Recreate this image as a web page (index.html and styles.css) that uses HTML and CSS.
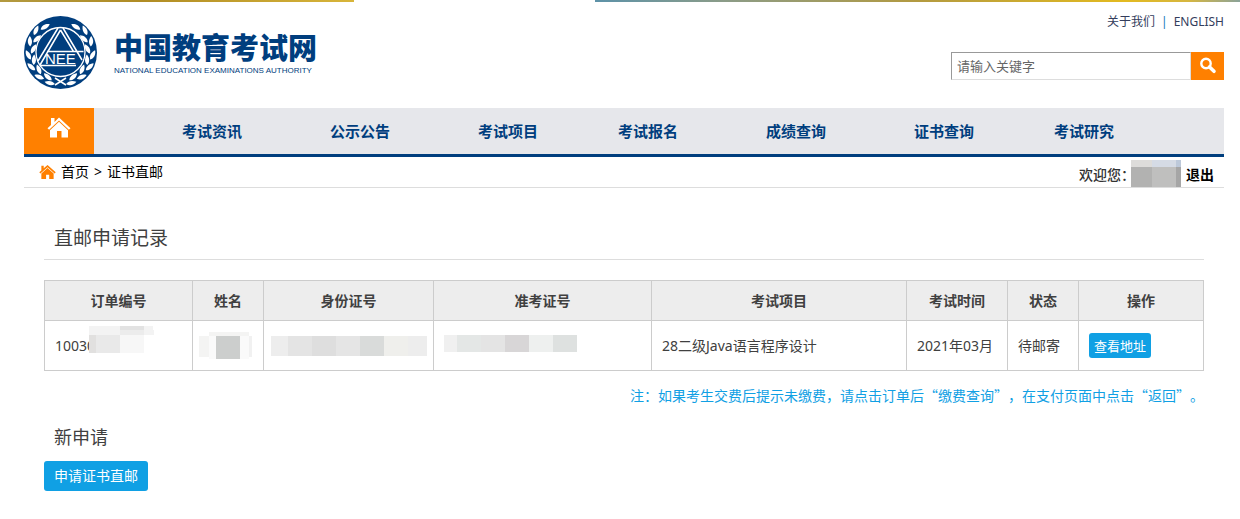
FILE: index.html
```html
<!DOCTYPE html>
<html lang="zh-CN">
<head>
<meta charset="utf-8">
<meta name="viewport" content="width=device-width, initial-scale=1">
<title>中国教育考试网 - 证书直邮</title>
<link rel="stylesheet" href="styles.css">
</head>
<body>
<div class="strip"><span class="strip-left"></span><span class="strip-right"></span></div>
<div class="page">
  <header class="header">
    <a class="brand" href="#">
      <svg class="emblem" viewBox="0 0 73 73" aria-hidden="true">
        <defs>
          <g id="leaf"><path d="M0 5C-3.200 2-2.600-2.500 0-5.500C2.500-2 2.800 2 0 5Z"/></g>
          <g id="branch" fill="#fff">
            <use href="#leaf" transform="translate(26 67) rotate(-78)"/>
            <use href="#leaf" transform="translate(24 61) rotate(-48)"/>
            <use href="#leaf" transform="translate(15.500 61) rotate(-68)"/>
            <use href="#leaf" transform="translate(15 53.500) rotate(-22)"/>
            <use href="#leaf" transform="translate(7.500 51) rotate(-48)"/>
            <use href="#leaf" transform="translate(10 44) rotate(2)"/>
            <use href="#leaf" transform="translate(4.500 39) rotate(-28)"/>
            <use href="#leaf" transform="translate(9.500 33) rotate(28)"/>
            <use href="#leaf" transform="translate(6 25.500) rotate(-2)"/>
            <use href="#leaf" transform="translate(13 23) rotate(48)"/>
            <use href="#leaf" transform="translate(12 14.500) rotate(24)"/>
            <use href="#leaf" transform="translate(21 11) rotate(60)"/>
          </g>
        </defs>
        <circle cx="36.500" cy="36.500" r="36.500" fill="#003e7e"/>
        <use href="#branch"/>
        <use href="#branch" transform="translate(73 0) scale(-1 1)"/>
        <path d="M31 69L42 62M42 69L31 62" stroke="#fff" stroke-width="1.500"/>
        <circle cx="36.500" cy="36" r="24.500" fill="#003e7e" stroke="#fff" stroke-width="1.300"/>
        <path d="M34 12L14 45M39 12L58 44M36.500 14L16 49M36.500 14L49.500 35.500M23 35.500H59.500M16 49.500H52" fill="none" stroke="#fff" stroke-width="1.500"/>
        <text x="21" y="48" class="emblem-text">NEE</text>
      </svg>
      <span class="brand-names">
        <strong class="brand-cn">中国教育考试网</strong>
        <span class="brand-en">NATIONAL EDUCATION EXAMINATIONS AUTHORITY</span>
      </span>
    </a>
    <div class="tools">
      <div class="links"><a href="#">关于我们</a><span class="bar">|</span><a href="#">ENGLISH</a></div>
      <form class="search">
        <input type="text" aria-label="请输入关键字" placeholder="请输入关键字">
        <button type="button" aria-label="搜索">
          <svg width="18" height="18" viewBox="0 0 18 18" fill="none" stroke="#fff"><circle cx="7" cy="6.500" r="4.700" stroke-width="2.400"/><path d="M10.500 10L15 14.300" stroke-width="3.600" stroke-linecap="round"/></svg>
        </button>
      </form>
    </div>
  </header>
  <nav class="nav" aria-label="主导航">
    <a class="home" href="#" aria-label="首页">
      <svg width="24" height="22" viewBox="0 0 24 22" fill="#fff"><path d="M4 1h3.500v4L12 .5l11.500 10.800-1.600 1.500L12 3.500 2.100 12.800.5 11.300 4 8Z"/><path d="M12 4.700L21 13.200V20.500H14.500V14H10V20.500H3V13.200Z"/></svg>
    </a>
    <ul class="menu">
      <li><a href="#">考试资讯</a></li>
      <li><a href="#">公示公告</a></li>
      <li class="tight"><a href="#">考试项目</a></li>
      <li><a href="#">考试报名</a></li>
      <li><a href="#">成绩查询</a></li>
      <li class="tight"><a href="#">证书查询</a></li>
      <li><a href="#">考试研究</a></li>
    </ul>
  </nav>
  <div class="crumbs">
    <div class="trail">
      <svg width="17" height="16" viewBox="0 0 18 16" fill="#ff8000"><path d="M2.500 1.500H5V4L9 .5l8.700 7.800-1.200 1.200L9 2.900 1.500 9.500.3 8.300 2.500 6.300Z"/><path d="M9 3.800L15.500 9.500V15.500H10.800V11H7.500V15.500H2.500V9.500Z"/></svg>
      <a href="#">首页</a><span class="sep">&gt;</span><span>证书直邮</span>
    </div>
    <div class="user">
      <span>欢迎您：</span>
      <svg width="50" height="27" viewBox="0 0 50 27" shape-rendering="crispEdges" aria-hidden="true"><path fill="#dddcda" d="M0 0h21v7H0z"/><path fill="#d5dbe5" d="M21 0h24v7H21z"/><path fill="#bdc9da" d="M45 0h5v7h-5z"/><path fill="#b2b2b1" d="M0 7h21v20H0z"/><path fill="#bfbfbe" d="M21 7h24v20H21z"/><path fill="#a6a6a6" d="M45 7h5v20h-5z"/></svg>
      <a href="#">退出</a>
    </div>
  </div>
  <main class="content">
    <h1>直邮申请记录</h1>
    <table class="records">
      <colgroup><col class="c-order"><col class="c-name"><col class="c-id"><col class="c-ticket"><col class="c-exam"><col class="c-date"><col class="c-state"><col class="c-action"></colgroup>
      <thead><tr><th scope="col">订单编号</th><th scope="col">姓名</th><th scope="col">身份证号</th><th scope="col">准考证号</th><th scope="col">考试项目</th><th scope="col">考试时间</th><th scope="col">状态</th><th scope="col">操作</th></tr></thead>
      <tbody><tr>
        <td class="order">10030<svg class="cover" width="65" height="27" viewBox="0 0 65 27" shape-rendering="crispEdges" aria-hidden="true"><path fill="#f3f3f3" d="M0 0h64v4h1v5H0z"/><path fill="#e2e2e2" d="M31 0h24v4H31z"/><path fill="#ececec" d="M31 4h24v5H31z"/><path fill="#e1e0df" d="M0 9h7v18H0z"/><path fill="#e9e9e9" d="M7 9h24v18H7z"/><path fill="#f7f7f7" d="M31 9h24v18H31z"/></svg></td>
        <td class="masked"><svg width="53" height="27" viewBox="0 0 53 27" shape-rendering="crispEdges" aria-hidden="true"><path fill="#f4f4f3" d="M0 4h10v21H0zM10 0h40v4H10z"/><path fill="#fafafa" d="M10 4h40v23H10z"/><path fill="#cccecd" d="M17 4h24v23H17z"/><path fill="#f1f1f1" d="M50 4h3v21h-3z"/></svg></td>
        <td class="masked"><svg width="157" height="20" viewBox="0 0 157 20" shape-rendering="crispEdges" aria-hidden="true"><path fill="#ededed" d="M1 0h156v20H1z"/><path fill="#e4e4e4" d="M18 0h24v20H18z"/><path fill="#dedede" d="M42 0h24v20H42z"/><path fill="#e5e5e5" d="M66 0h24v20H66z"/><path fill="#d9dbda" d="M90 0h24v20H90z"/><path fill="#efefec" d="M114 0h24v20h-24z"/></svg></td>
        <td><svg width="133" height="21" viewBox="0 0 133 21" shape-rendering="crispEdges" aria-hidden="true"><path fill="#f0f0f0" d="M0 0h13v17H0z"/><path fill="#e4e7e6" d="M13 0h24v17H13z"/><path fill="#e4e4e4" d="M37 0h24v17H37z"/><path fill="#d8d6d7" d="M61 0h24v17H61z"/><path fill="#eef0ef" d="M85 0h24v17H85z"/><path fill="#dee1e0" d="M109 0h24v17h-24z"/></svg></td>
        <td>28二级Java语言程序设计</td>
        <td>2021年03月</td>
        <td>待邮寄</td>
        <td><button class="btn btn-small" type="button">查看地址</button></td>
      </tr></tbody>
    </table>
    <p class="note">注：如果考生交费后提示未缴费，请点击订单后“缴费查询”，在支付页面中点击“返回”。</p>
    <h2>新申请</h2>
    <button class="btn" type="button">申请证书直邮</button>
  </main>
</div>
</body>
</html>
```

FILE: styles.css
```css
* { box-sizing: border-box; }
body {
  margin: 0;
  background: #fff;
  color: #404040;
  font: 14px/20px "Noto Sans", "Noto Sans CJK SC", sans-serif;
}
a { color: inherit; text-decoration: none; }
svg { display: block; flex: none; }
button, input { font-family: inherit; border-radius: 0; }

.strip { display: flex; justify-content: space-between; height: 2px; }
.strip-left { width: 354px; background: linear-gradient(90deg, #b39a40, #b08c24 40%, #d8b53a); }
.strip-right { width: 52%; background: linear-gradient(90deg, #5d92a8, #8b9c88 20%, #b39a40 50%, #e3ba20 82%, #d6b640 92%, #8ba39a); }

.page { padding: 0 16px 0 24px; }
.header { display: flex; justify-content: space-between; height: 106px; }
.brand { display: flex; gap: 17px; align-items: flex-start; padding-top: 14px; color: #003e7e; }
.emblem { width: 73px; height: 73px; }
.emblem-text { fill: #fff; font: 15px "Liberation Sans", Arial, sans-serif; }
.brand-names { display: flex; flex-direction: column; padding-top: 11px; white-space: nowrap; }
.brand-cn { font-size: 29px; line-height: 38px; font-weight: 900; font-family: "Noto Sans CJK SC", sans-serif; }
.brand-en { font: 8px/12px "Liberation Sans", Arial, sans-serif; }

.tools { display: flex; flex-direction: column; align-items: flex-end; padding-top: 10px; }
.links { display: flex; gap: 6px; font-size: 12px; line-height: 20px; color: #333d5c; }
.bar { color: #1479b8; }
.search { display: flex; margin-top: 20px; }
.search input {
  width: 240px; height: 28px; padding: 0 5px;
  border: 1px solid #ddd; border-top-color: #999; border-left-color: #999;
  font-size: 13px;
}
.search input::placeholder { color: #666; opacity: 1; }
.search button {
  display: flex; align-items: center; justify-content: center;
  width: 33px; height: 28px; padding: 0; border: 0; background: #ff8000;
}

.nav { display: flex; height: 49px; background: #e6e7eb; border-bottom: 3px solid #003e7e; }
.home { display: flex; justify-content: center; width: 70px; padding-top: 9px; background: #ff8000; }
.menu {
  display: flex; align-items: center; gap: 80px;
  margin: 0; padding: 0 0 0 88px; list-style: none;
  color: #003e7e; font-size: 15px; font-weight: bold; white-space: nowrap;
}
.menu li { margin-right: 8px; }
.menu .tight { margin-right: 0; }

.crumbs { display: flex; justify-content: space-between; height: 31px; border-bottom: 1px solid #ddd; color: #000; }
.trail { display: flex; align-items: center; gap: 5px; padding-left: 15px; }
.user { display: flex; align-items: center; gap: 5px; padding: 3px 10px 0 0; font-weight: 500; font-family: "Noto Sans CJK SC", sans-serif; }
.user span { width: 47px; white-space: nowrap; color: #333; }
.user a { font-weight: bold; }

.content { padding: 35px 20px 28px; }
h1, h2 { margin: 0; padding: 0 10px; font-weight: normal; }
h1 { font-size: 19px; line-height: 30px; padding-bottom: 6px; border-bottom: 1px solid #ddd; }
h2 { font-size: 18px; line-height: 28px; margin: 18px 0 10px; }

.records { width: 100%; margin-top: 20px; table-layout: fixed; border-collapse: collapse; }
.records th, .records td { border: 1px solid #ccc; padding: 0 10px; white-space: nowrap; }
.records th { height: 40px; background: #ededed; text-align: center; }
.records td { height: 50px; }
.records .order { position: relative; }
.records .masked { padding: 0 6px; }
.cover { position: absolute; left: 44px; top: 5px; }
.c-order { width: 148px; }
.c-name { width: 71px; }
.c-id { width: 170px; }
.c-ticket { width: 218px; }
.c-exam { width: 255px; }
.c-date { width: 101px; }
.c-state { width: 71px; }
.c-action { width: 125px; }

.note { margin: 14px 0 0; text-align: right; text-spacing-trim: space-all; color: #10a0e4; font-family: "Noto Sans CJK SC", sans-serif; }
.btn {
  display: block; height: 30px; padding: 0 10px; border: 0; border-radius: 3px;
  background: #10a0e4; color: #fff; font-size: 14px; line-height: 20px;
}
.btn-small { height: 25px; padding: 0 5px; font-size: 13px; }
```
